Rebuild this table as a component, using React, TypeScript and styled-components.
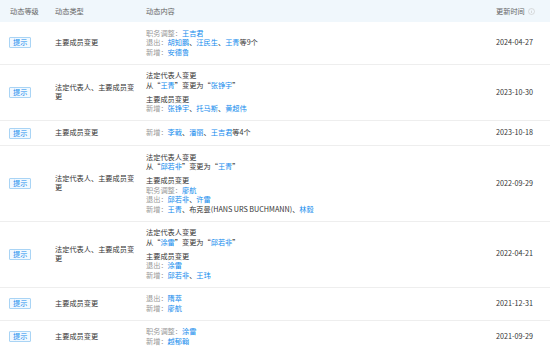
import React from "react";
import styled, { createGlobalStyle } from "styled-components";

const Global = createGlobalStyle`
  html, body { margin: 0; padding: 0; background: #fff; }
  body { font-family: "Noto Sans CJK SC", "Microsoft YaHei", sans-serif; }
`;

const Table = styled.div`
  width: 550px;
  font-size: 7.2px;
  color: #333;
`;

const cols = "55px 91px 350px 1fr";

const HeaderRow = styled.div`
  display: grid;
  grid-template-columns: ${cols};
  height: 22px;
  align-items: center;
  background: #f0f7fc;
  color: #666;
`;

const HeadCell = styled.div<{ $first?: boolean }>`
  padding-left: ${(p) => (p.$first ? "10px" : "0")};
  display: flex;
  align-items: center;
  gap: 3px;
`;

const Row = styled.div`
  display: grid;
  grid-template-columns: ${cols};
  align-items: center;
  border-bottom: 1px solid #eeeeee;
  padding: 6.5px 0;
  line-height: 9.5px;
`;

const LevelCell = styled.div`
  padding-left: 9px;
`;

const Badge = styled.span`
  display: inline-block;
  border: 1px solid #a9d4f5;
  background: #f2f9ff;
  color: #128bed;
  padding: 0 3px;
  line-height: 9px;
  border-radius: 1px;
`;

const TypeCell = styled.div`
  padding-right: 6px;
`;

const ContentCell = styled.div`
  display: flex;
  flex-direction: column;
  gap: 4.5px;
`;

const Group = styled.div``;

const Line = styled.div`
  white-space: nowrap;
`;

const Label = styled.span`
  color: #999;
`;

const Name = styled.span`
  color: #128bed;
`;

const DateCell = styled.div``;

const InfoIcon = () => (
  <svg width="7" height="7" viewBox="0 0 14 14">
    <circle cx="7" cy="7" r="6" fill="none" stroke="#c8c8c8" strokeWidth="1.2" />
    <path d="M7 6v4" stroke="#c8c8c8" strokeWidth="1.3" />
    <circle cx="7" cy="4.2" r="0.8" fill="#c8c8c8" />
  </svg>
);

type Seg = { t: string; k?: "label" | "name" };
type Item = { type: string; date: string; groups: Seg[][][] };

const L = (t: string): Seg => ({ t, k: "label" });
const N = (t: string): Seg => ({ t, k: "name" });
const T = (t: string): Seg => ({ t });

const data: Item[] = [
  {
    type: "主要成员变更",
    date: "2024-04-27",
    groups: [
      [
        [L("职务调整："), N("王吉君")],
        [L("退出："), N("胡知鹏"), T("、"), N("汪民生"), T("、"), N("王青"), T("等9个")],
        [L("新增："), N("安德鲁")],
      ],
    ],
  },
  {
    type: "法定代表人、主要成员变更",
    date: "2023-10-30",
    groups: [
      [[T("法定代表人变更")], [T("从“"), N("王青"), T("”变更为“"), N("张铮宇"), T("”")]],
      [[T("主要成员变更")], [L("新增："), N("张铮宇"), T("、"), N("托马斯"), T("、"), N("黄超伟")]],
    ],
  },
  {
    type: "主要成员变更",
    date: "2023-10-18",
    groups: [[[L("新增："), N("李戟"), T("、"), N("潘丽"), T("、"), N("王吉君"), T("等4个")]]],
  },
  {
    type: "法定代表人、主要成员变更",
    date: "2022-09-29",
    groups: [
      [[T("法定代表人变更")], [T("从“"), N("邱若非"), T("”变更为“"), N("王青"), T("”")]],
      [
        [T("主要成员变更")],
        [L("职务调整："), N("廖航")],
        [L("退出："), N("邱若非"), T("、"), N("许雷")],
        [L("新增："), N("王青"), T("、布克曼(HANS URS BUCHMANN)、"), N("林毅")],
      ],
    ],
  },
  {
    type: "法定代表人、主要成员变更",
    date: "2022-04-21",
    groups: [
      [[T("法定代表人变更")], [T("从“"), N("涂雷"), T("”变更为“"), N("邱若非"), T("”")]],
      [[T("主要成员变更")], [L("退出："), N("涂雷")], [L("新增："), N("邱若非"), T("、"), N("王玮")]],
    ],
  },
  {
    type: "主要成员变更",
    date: "2021-12-31",
    groups: [[[L("退出："), N("隋萃")], [L("新增："), N("廖航")]]],
  },
  {
    type: "主要成员变更",
    date: "2021-09-29",
    groups: [[[L("职务调整："), N("涂雷")], [L("新增："), N("越郁翰")]]],
  },
];

const renderSeg = (s: Seg, i: number) =>
  s.k === "label" ? <Label key={i}>{s.t}</Label> : s.k === "name" ? <Name key={i}>{s.t}</Name> : <span key={i}>{s.t}</span>;

export default function App() {
  return (
    <>
      <Global />
      <Table>
        <HeaderRow>
          <HeadCell $first>动态等级</HeadCell>
          <HeadCell>动态类型</HeadCell>
          <HeadCell>动态内容</HeadCell>
          <HeadCell>
            更新时间
            <InfoIcon />
          </HeadCell>
        </HeaderRow>
        {data.map((it, i) => (
          <Row key={i}>
            <LevelCell>
              <Badge>提示</Badge>
            </LevelCell>
            <TypeCell>{it.type}</TypeCell>
            <ContentCell>
              {it.groups.map((g, gi) => (
                <Group key={gi}>
                  {g.map((line, li) => (
                    <Line key={li}>{line.map(renderSeg)}</Line>
                  ))}
                </Group>
              ))}
            </ContentCell>
            <DateCell>{it.date}</DateCell>
          </Row>
        ))}
      </Table>
    </>
  );
}
